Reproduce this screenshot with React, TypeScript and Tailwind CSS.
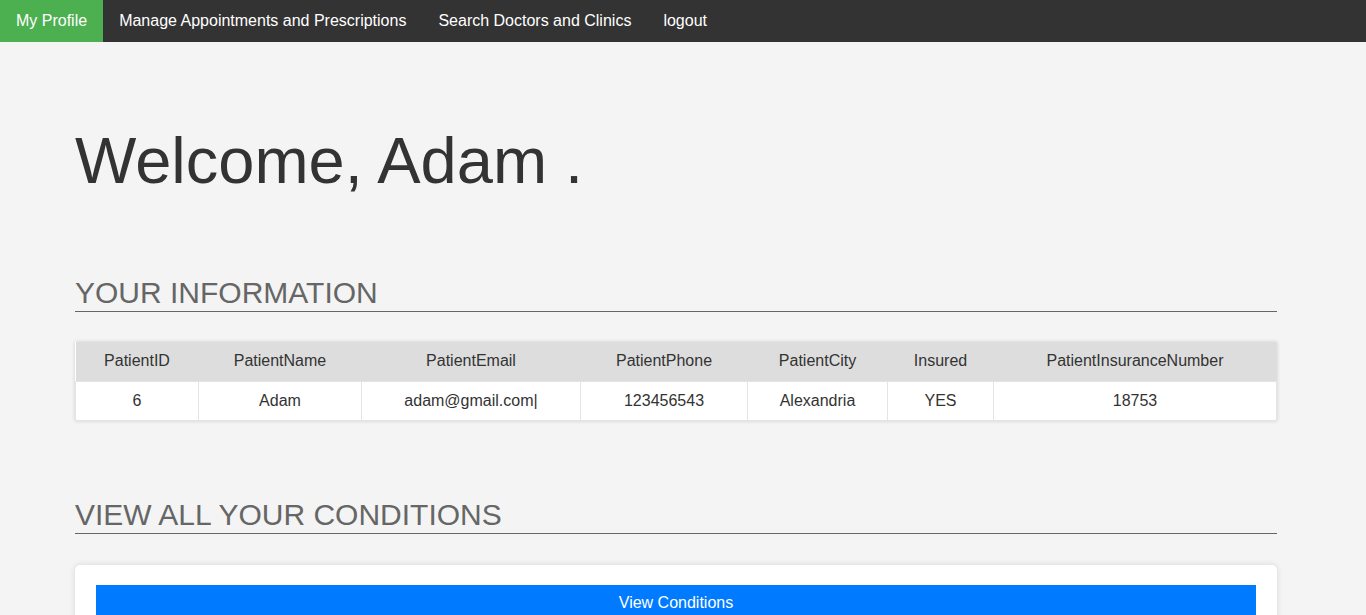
export default function App() {
  const cols = [
    { h: "PatientID", v: "6", w: "w-[123px]" },
    { h: "PatientName", v: "Adam", w: "w-[163px]" },
    { h: "PatientEmail", v: "adam@gmail.com|", w: "w-[219px]" },
    { h: "PatientPhone", v: "123456543", w: "w-[167px]" },
    { h: "PatientCity", v: "Alexandria", w: "w-[140px]" },
    { h: "Insured", v: "YES", w: "w-[106px]" },
    { h: "PatientInsuranceNumber", v: "18753", w: "" },
  ];

  return (
    <div className="min-h-screen bg-[#f4f4f4] text-[#333]" style={{ fontFamily: '"Liberation Sans", Arial, sans-serif' }}>
      <nav className="flex h-[42px] bg-[#333] text-[16px] text-white">
        <a className="flex items-center bg-[#4CAF50] px-4">My Profile</a>
        <a className="flex items-center px-4">Manage Appointments and Prescriptions</a>
        <a className="flex items-center px-4">Search Doctors and Clinics</a>
        <a className="flex items-center px-4">logout</a>
      </nav>

      <main className="ml-[75px] w-[1202px] pb-10">
        <h1 className="mt-[82px] text-[65px] leading-[74px] text-[#333]">Welcome, Adam .</h1>

        <h2 className="mt-[78px] border-b border-[#666] pb-[1px] text-[30px] leading-[34px] text-[#666]">YOUR INFORMATION</h2>
        <table className="mt-[30px] w-full border-collapse bg-white text-[16px] shadow-[0_0_4px_rgba(0,0,0,0.15)]">
          <thead>
            <tr className="h-[39px] bg-[#ddd]">
              {cols.map((c) => (
                <th key={c.h} className={`${c.w} font-normal`}>{c.h}</th>
              ))}
            </tr>
          </thead>
          <tbody>
            <tr className="h-[39px]">
              {cols.map((c) => (
                <td key={c.h} className="border border-[#e4e4e4] text-center">{c.v}</td>
              ))}
            </tr>
          </tbody>
        </table>

        <h2 className="mt-[77px] border-b border-[#666] pb-[1px] text-[30px] leading-[34px] text-[#666]">VIEW ALL YOUR CONDITIONS</h2>
        <div className="mt-[31px] rounded-[5px] bg-white px-[21px] py-[20px] shadow-[0_0_6px_rgba(0,0,0,0.12)]">
          <button className="h-[36px] w-full bg-[#007BFF] text-[16px] text-white">View Conditions</button>
        </div>
      </main>
    </div>
  );
}
